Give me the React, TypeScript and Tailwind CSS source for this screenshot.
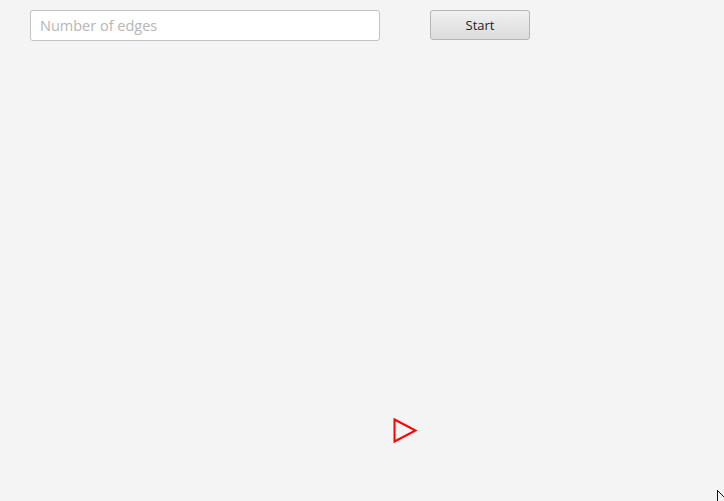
import React from 'react';

export default function App() {
  return (
    <div className="relative w-[724px] h-[501px] overflow-hidden bg-[#f4f4f4]" style={{ fontFamily: '"Open Sans", "Noto Sans", sans-serif' }}>
      {/* Toolbar */}
      <div className="flex items-start gap-[50px] pl-[30px] pt-[10px]">
        <input
          type="text"
          placeholder="Number of edges"
          className="w-[350px] h-[31px] px-[9px] bg-white border border-[#c2c2c2] rounded-[3px] text-[14.5px] text-[#333] placeholder:text-[#b5b5b5] outline-none"
        />
        <button className="w-[100px] h-[30px] pt-[2px] rounded-[3px] border border-[#b5b5b5] bg-gradient-to-b from-[#f0f0f0] to-[#dcdcdc] text-[13px] text-[#222]">
          Start
        </button>
      </div>

      {/* Canvas */}
      <svg className="absolute left-0 top-0" width="724" height="501">
        <polygon points="394.5,419.5 415.5,430.5 394.5,441.5" fill="none" stroke="#ff0000" strokeWidth="2" />
        <path d="M717.5 490 L717.5 501 M717.5 490.5 L724 497" stroke="#111" strokeWidth="1" fill="none" />
      </svg>
    </div>
  );
}
